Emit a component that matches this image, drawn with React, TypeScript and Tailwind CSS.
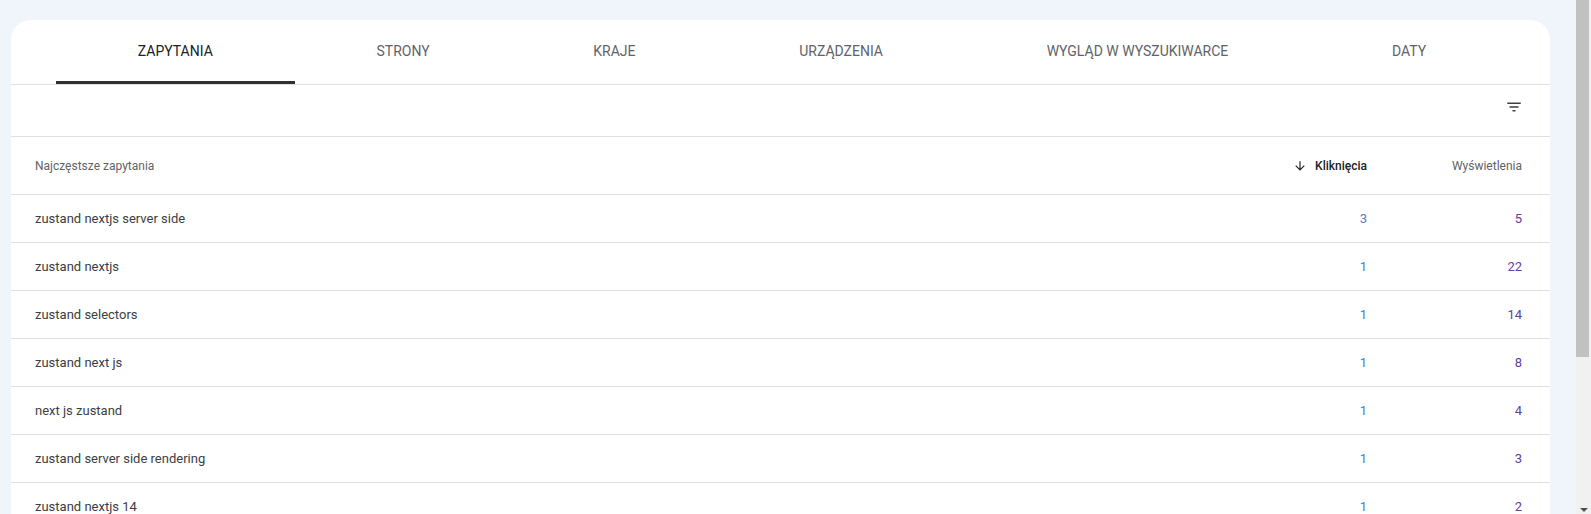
const tabs = [
  "ZAPYTANIA",
  "STRONY",
  "KRAJE",
  "URZĄDZENIA",
  "WYGLĄD W WYSZUKIWARCE",
  "DATY",
];

const rows = [
  { query: "zustand nextjs server side", clicks: 3, impressions: 5 },
  { query: "zustand nextjs", clicks: 1, impressions: 22 },
  { query: "zustand selectors", clicks: 1, impressions: 14 },
  { query: "zustand next js", clicks: 1, impressions: 8 },
  { query: "next js zustand", clicks: 1, impressions: 4 },
  { query: "zustand server side rendering", clicks: 1, impressions: 3 },
  { query: "zustand nextjs 14", clicks: 1, impressions: 2 },
];

function FilterIcon() {
  return (
    <svg viewBox="0 0 24 24" className="h-[18px] w-[18px] fill-[#3c4043]">
      <path d="M10 18h4v-2h-4v2zM3 6v2h18V6H3zm3 7h12v-2H6v2z" />
    </svg>
  );
}

function ArrowDown() {
  return (
    <svg viewBox="0 0 24 24" className="h-[14px] w-[14px] fill-[#202124]">
      <path d="M20 12l-1.41-1.41L13 16.17V4h-2v12.17l-5.58-5.59L4 12l8 8 8-8z" />
    </svg>
  );
}

export default function App() {
  return (
    <div className="flex h-[514px] overflow-hidden bg-[#f0f4fb] font-['Roboto',sans-serif]">
      <main className="flex-1 pt-[20px] pl-[11px] pr-[26px]">
        <div className="h-full rounded-t-[20px] bg-white">
          {/* tabs */}
          <div className="flex h-[65px] border-b border-[#e0e0e0] px-[45px] pr-[42px]">
            {tabs.map((t, i) => (
              <div
                key={t}
                className={
                  "flex flex-auto items-center justify-center border-b-[3px] pt-[2px] text-[14px] " +
                  (i === 0
                    ? "border-[#303134] text-[#202124]"
                    : "border-transparent text-[#5f6368]")
                }
              >
                {t}
              </div>
            ))}
          </div>

          {/* toolbar */}
          <div className="flex h-[52px] items-center justify-end border-b border-[#e0e0e0] pr-[27px] pb-[7px]">
            <FilterIcon />
          </div>

          {/* table header */}
          <div className="flex h-[58px] items-center border-b border-[#e0e0e0] pl-[24px] pr-[28px] text-[12px]">
            <div className="flex-1 text-[#5f6368]">Najczęstsze zapytania</div>
            <div className="flex w-[155px] items-center justify-end font-medium text-[#202124]">
              <span className="mr-[8px]">
                <ArrowDown />
              </span>
              Kliknięcia
            </div>
            <div className="w-[155px] text-right text-[#5f6368]">Wyświetlenia</div>
          </div>

          {rows.map((r) => (
            <div
              key={r.query}
              className="flex h-[48px] items-center border-b border-[#e0e0e0] pl-[24px] pr-[28px] text-[13px]"
            >
              <div className="flex-1 text-[#3c4043]">{r.query}</div>
              <div className="w-[155px] text-right text-[#4a80d0]">{r.clicks}</div>
              <div className="w-[155px] text-right text-[#6240a0]">{r.impressions}</div>
            </div>
          ))}
        </div>
      </main>

      {/* page scrollbar */}
      <div className="flex w-[15px] flex-col bg-[#f1f1f1]">
        <div className="h-[357px] w-[13px] bg-[#c1c1c1]" />
        <div className="flex-1" />
        <div className="flex h-[6px] justify-center">
          <div className="h-0 w-0 border-x-[4px] border-t-[4px] border-x-transparent border-t-[#505050]" />
        </div>
      </div>
    </div>
  );
}
